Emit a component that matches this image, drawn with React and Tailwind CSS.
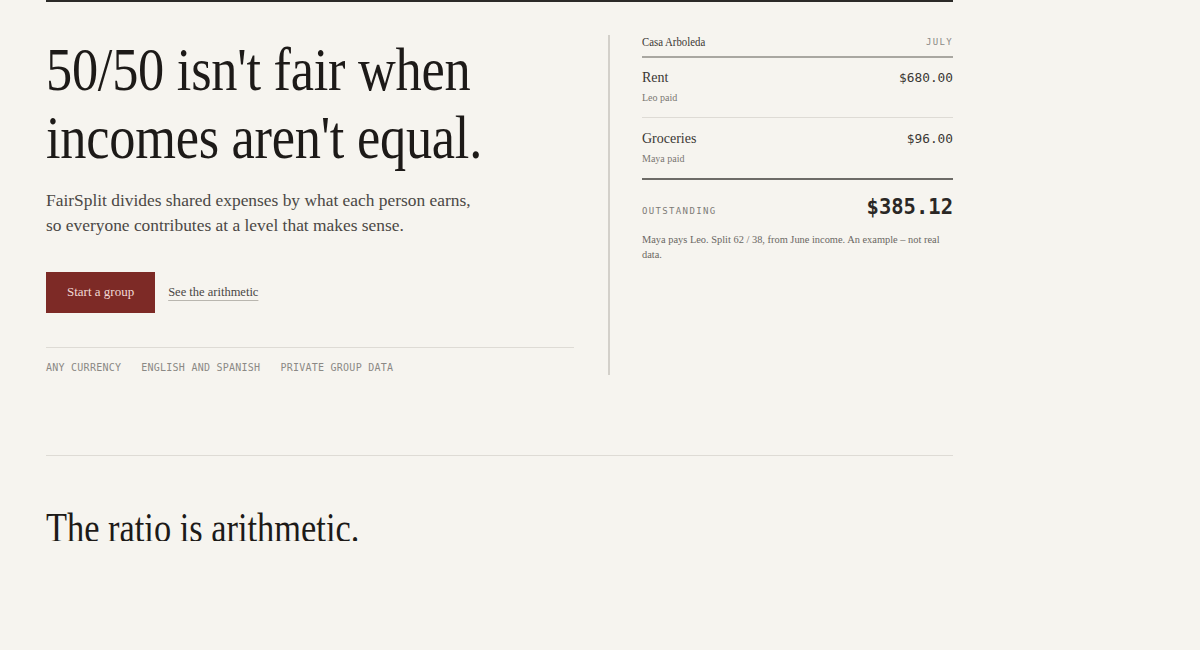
import React from "react";

export default function App() {
  return (
    <div className="min-h-[650px] w-full bg-[#f6f4ef] text-[#1f1c1a] font-['Liberation_Serif',serif]">
      <div className="ml-[46px] w-[907px]">
        <div className="h-[2px] bg-[#2b2a28]" />

        {/* Hero */}
        <section className="mt-[33px] flex">
          <div className="w-[528px] shrink-0">
            <h1 className="origin-left scale-x-[0.845] whitespace-nowrap text-[62px] leading-[68px] font-normal tracking-[-0.005em] text-[#1d1a18]">
              50/50 isn't fair when
              <br />
              incomes aren't equal.
            </h1>
            <p className="mt-[16.5px] whitespace-nowrap text-[17.4px] leading-[25px] text-[#4b4845]">
              FairSplit divides shared expenses by what each person earns,
              <br />
              so everyone contributes at a level that makes sense.
            </p>
            <div className="mt-[34px] flex items-center gap-[13px]">
              <button className="h-[41px] bg-[#7d2a26] px-[21px] text-[13px] text-[#f1d9d5]">
                Start a group
              </button>
              <a className="text-[12.5px] text-[#4a4744] underline decoration-[#b9b6af] decoration-1 underline-offset-[4px]">
                See the arithmetic
              </a>
            </div>
            <div className="mt-[34px] border-t border-[#dedbd5] pt-[13px] flex gap-[20px] font-['DejaVu_Sans_Mono',monospace] text-[10px] leading-[14px] tracking-[0.025em] text-[#8b8985]">
              <span>ANY CURRENCY</span>
              <span>ENGLISH AND SPANISH</span>
              <span>PRIVATE GROUP DATA</span>
            </div>
          </div>

          <div className="ml-[34px] border-l-2 border-[#d3d0ca] pl-[32px] flex-1">
            <div className="flex items-center justify-between border-b-2 border-[#a9a7a1] pb-[7px]">
              <span className="origin-left scale-x-[0.83] whitespace-nowrap text-[13px] leading-[14px] text-[#3a3734]">
                Casa Arboleda
              </span>
              <span className="font-['DejaVu_Sans_Mono',monospace] text-[9px] leading-[14px] tracking-[0.15em] text-[#8b8985]">
                JULY
              </span>
            </div>

            <div className="border-b border-[#dedbd5] pt-[11px] pb-[12px]">
              <div className="flex items-center justify-between">
                <span className="text-[14px] leading-[18px] text-[#3a3734]">Rent</span>
                <span className="font-['DejaVu_Sans_Mono',monospace] text-[12.8px] leading-[18px] text-[#3a3734]">
                  $680.00
                </span>
              </div>
              <div className="mt-[4px] text-[10px] leading-[14px] text-[#7a7772]">Leo paid</div>
            </div>

            <div className="border-b-2 border-[#6d6b67] pt-[12px] pb-[12px]">
              <div className="flex items-center justify-between">
                <span className="text-[14px] leading-[18px] text-[#3a3734]">Groceries</span>
                <span className="font-['DejaVu_Sans_Mono',monospace] text-[12.8px] leading-[18px] text-[#3a3734]">
                  $96.00
                </span>
              </div>
              <div className="mt-[4px] text-[10px] leading-[14px] text-[#7a7772]">Maya paid</div>
            </div>

            <div className="pt-[15px] flex items-baseline justify-between">
              <span className="font-['DejaVu_Sans_Mono',monospace] text-[9px] tracking-[0.15em] text-[#7d7b77]">
                OUTSTANDING
              </span>
              <span className="font-['DejaVu_Sans_Mono',monospace] text-[20.5px] leading-[24px] font-semibold text-[#2a2725]">
                $385.12
              </span>
            </div>
            <p className="mt-[13px] text-[10.4px] leading-[15px] text-[#6a6763]">
              Maya pays Leo. Split 62 / 38, from June income. An example – not real data.
            </p>
          </div>
        </section>

        <div className="mt-[80px] border-t border-[#dedbd5]" />

        <div className="mt-[48px] h-[37px] overflow-hidden">
          <h2 className="origin-left scale-x-[0.8] whitespace-nowrap text-[43px] leading-[47px] font-normal text-[#1d1a18]">
            The ratio is arithmetic.
          </h2>
        </div>
      </div>
    </div>
  );
}
